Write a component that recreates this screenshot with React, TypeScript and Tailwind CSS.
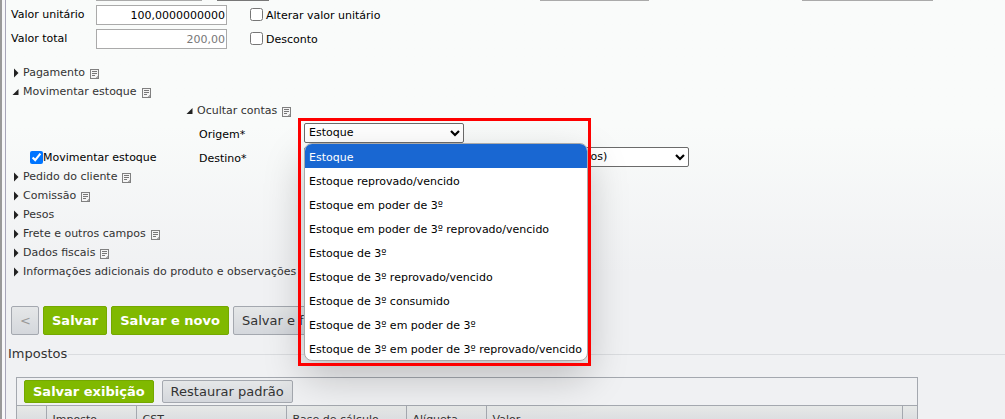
import { useState } from "react"
import type { ReactNode } from "react"

const OPTIONS = [
  "Estoque",
  "Estoque reprovado/vencido",
  "Estoque em poder de 3º",
  "Estoque em poder de 3º reprovado/vencido",
  "Estoque de 3º",
  "Estoque de 3º reprovado/vencido",
  "Estoque de 3º consumido",
  "Estoque de 3º em poder de 3º",
  "Estoque de 3º em poder de 3º reprovado/vencido",
]

const SECTIONS = [
  { title: "Pedido do cliente", note: true },
  { title: "Comissão", note: true },
  { title: "Pesos", note: false },
  { title: "Frete e outros campos", note: true },
  { title: "Dados fiscais", note: true },
  { title: "Informações adicionais do produto e observações", note: false },
]

const NoteIcon = () => (
  <svg width="9" height="10" viewBox="0 0 9 10" className="mt-px" shapeRendering="crispEdges" aria-hidden="true">
    <path d="M.5.5h8v9h-8z" fill="#f4f4f4" stroke="#808080" />
    <path d="M2 2.500h5M2 4.500h5M2 6.500h3" stroke="#777" />
    <path d="M7 7h1v2H6V8h1z" fill="#aaa" />
  </svg>
)

const Toggle = ({ title, note = true, open = false }: { title: string; note?: boolean; open?: boolean }) => (
  <button type="button" aria-expanded={open} className="flex h-[19px] items-center pt-px text-[#333] whitespace-nowrap">
    <svg width="7" height="10" viewBox="0 0 7 10" className="mr-1" aria-hidden="true">
      {open ? <path d="M6.500 2v6H.5z" fill="#222" /> : <path d="M2 .5L6.500 5 2 9.500z" fill="#222" />}
    </svg>
    <span className="mr-[5px]">{title}</span>
    {note && <NoteIcon />}
  </button>
)

const Select = ({ id, value, className }: { id: string; value: string; className: string }) => (
  <div className={`relative h-5 ${className}`}>
    <select id={id} className="h-5 w-full appearance-none rounded-xs border border-[#6b6b6b] bg-white pl-1 pr-5 leading-4">
      <option>{value}</option>
    </select>
    <svg width="10" height="7" viewBox="0 0 10 7" className="pointer-events-none absolute right-1 top-[7px]" aria-hidden="true">
      <path d="M1 1l4 4 4-4" fill="none" stroke="#000" strokeWidth="2.2" />
    </svg>
  </div>
)

const Check = ({ id, label }: { id: string; label: string }) => (
  <div className="flex items-center gap-[3px]">
    <input type="checkbox" id={id} className="mb-px size-[13px]" />
    <label htmlFor={id} className="pt-px">{label}</label>
  </div>
)

const PrimaryButton = ({ children, className }: { children: ReactNode; className: string }) => (
  <button type="button" className={`rounded-xs border border-[#74a800] bg-[#80b900] px-2 text-[13px] font-bold text-white whitespace-nowrap ${className}`}>
    {children}
  </button>
)

const GrayButton = ({ children, className }: { children: ReactNode; className: string }) => (
  <button type="button" className={`rounded-xs border border-[#a4a8af] bg-linear-to-b from-[#e5e7e8] to-[#d4d7dc] px-2 text-[13px] whitespace-nowrap ${className}`}>
    {children}
  </button>
)

export default function App() {
  const [origem, setOrigem] = useState(OPTIONS[0])

  return (
    <div className="flex h-screen overflow-hidden bg-linear-to-b from-[#f9fbfa] from-30% to-[#f0f1f3] to-65% font-['Verdana','DejaVu_Sans',sans-serif] text-[11px] leading-4 text-black">
      <div className="w-[2px] shrink-0 bg-[#999]" />
      <div className="w-1 shrink-0 border-r border-[#a7a5b8] bg-[#f7f7f9]" />

      <main className="min-w-0 flex-1">
        <div className="flex h-px">
          <div className="ml-[90px] w-[106px] bg-[#aaa]" />
          <div className="ml-[15px] w-[52px] bg-[#777]" />
          <div className="ml-[271px] w-[109px] bg-[#aaa]" />
          <div className="ml-[153px] w-[131px] bg-[#aaa]" />
        </div>

        <div className="flex flex-col gap-1 pt-1 pl-[5px]">
          <div className="flex items-center">
            <label htmlFor="unitario" className="w-[85px]">Valor unitário</label>
            <input id="unitario" defaultValue="100,0000000000" className="mr-[23px] h-5 w-[131px] border border-[#aaa] bg-white px-px text-right" />
            <Check id="alterar" label="Alterar valor unitário" />
          </div>
          <div className="flex items-center">
            <label htmlFor="total" className="w-[85px]">Valor total</label>
            <input id="total" readOnly defaultValue="200,00" className="mr-[23px] h-5 w-[131px] border border-[#aaa] bg-white px-px text-right text-[#777]" />
            <Check id="desconto" label="Desconto" />
          </div>
        </div>

        <div className="mt-[14px] flex flex-col items-start pl-[6px]">
          <Toggle title="Pagamento" />
          <Toggle title="Movimentar estoque" open />
          <div className="flex w-full">
            <div className="flex w-[174px] shrink-0 items-end pl-[18px]">
              <div className="flex h-[19px] items-center">
                <input type="checkbox" id="movimentar" defaultChecked className="mb-px size-[13px] accent-[#0075ff]" />
                <label htmlFor="movimentar" className="pt-px">Movimentar estoque</label>
              </div>
            </div>
            <div>
              <Toggle title="Ocultar contas" open />
              <div className="mt-[3px] flex flex-col gap-1 pl-[13px]">
                <div className="flex items-center">
                  <label htmlFor="origem" className="w-[105px] pt-[3px]">Origem*</label>
                  <div className="relative">
                    <Select id="origem" value={origem} className="w-40" />
                    <div className="absolute -left-[6px] -top-[5px] z-20 h-[248px] w-[293px] border-3 border-[#fe0000] pointer-events-none" />
                    <ul role="listbox" aria-label="Origem" className="absolute left-0 top-5 z-10 w-[284px] overflow-hidden rounded-lg border border-[#aaa] bg-white shadow-[0_16px_40px_rgba(0,0,0,0.22)]">
                      {OPTIONS.map((option) => (
                        <li
                          key={option}
                          role="option"
                          aria-selected={option === origem}
                          onClick={() => setOrigem(option)}
                          className="h-6 pt-[2px] pl-1 leading-[23px] whitespace-nowrap aria-selected:bg-[#1967d2] aria-selected:text-white"
                        >
                          {option}
                        </li>
                      ))}
                    </ul>
                  </div>
                </div>
                <div className="flex items-center">
                  <label htmlFor="destino" className="w-[105px] pt-[3px]">Destino*</label>
                  <Select id="destino" value="Estoque principal (controle de estoques dos produtos)" className="w-[385px]" />
                </div>
              </div>
            </div>
          </div>
          {SECTIONS.map((section) => (
            <Toggle key={section.title} title={section.title} note={section.note} />
          ))}
        </div>

        <div className="mt-[25px] flex gap-1 pl-[5px] text-[#333]">
          <GrayButton className="h-[29px] w-7 text-[#999]">&lt;</GrayButton>
          <PrimaryButton className="h-[29px]">Salvar</PrimaryButton>
          <PrimaryButton className="h-[29px]">Salvar e novo</PrimaryButton>
          <GrayButton className="h-[29px]">Salvar e fechar</GrayButton>
        </div>

        <section className="mt-[10px] text-[#333]">
          <h2 className="flex items-center gap-px pl-[2px] text-[13px] leading-[18px] after:h-px after:flex-1 after:bg-[#dadcdf]">Impostos</h2>
          <div className="mt-[14px] mr-[87px] ml-[10px] border border-[#a4a8af]">
            <div className="flex gap-2 px-[7px] pt-[2px] pb-[2px]">
              <PrimaryButton className="h-[23px]">Salvar exibição</PrimaryButton>
              <GrayButton className="h-[23px]">Restaurar padrão</GrayButton>
            </div>
            <table className="w-full table-fixed border-t border-[#a4a8af] text-left">
              <thead>
                <tr className="h-7 bg-linear-to-b from-[#e7e9e8] to-[#d0d3d9] [&>th]:border-r [&>th]:border-[#a4a8af] [&>th]:pl-[6px] [&>th]:font-normal">
                  <th className="w-[29px]" />
                  <th className="w-[90px]">Imposto</th>
                  <th className="w-[150px]">CST</th>
                  <th className="w-[120px]">Base de cálculo</th>
                  <th className="w-20">Alíqueta</th>
                  <th>Valor</th>
                  <th className="w-[15px] border-r-0!" />
                </tr>
              </thead>
            </table>
          </div>
        </section>
      </main>
    </div>
  )
}
